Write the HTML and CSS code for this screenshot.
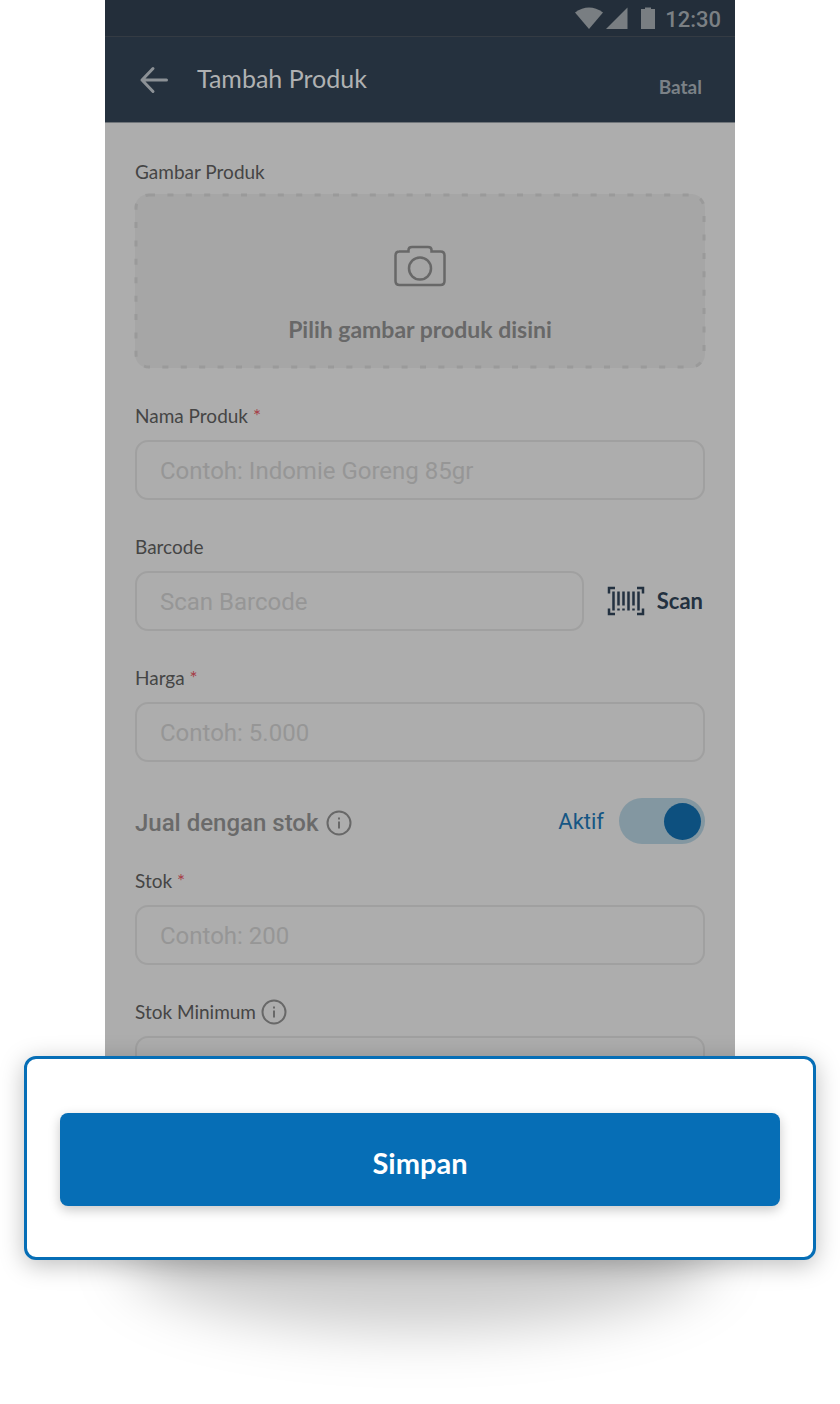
FILE: index.html
```html
<!DOCTYPE html>
<html lang="id">
<head>
<meta charset="utf-8">
<meta name="viewport" content="width=device-width, initial-scale=1">
<title>Tambah Produk</title>
<link rel="stylesheet" href="styles.css">
</head>
<body>
<main class="stage">
  <form class="phone">
    <div class="status">
      <svg class="status-icons" width="80" height="22" viewBox="0 0 80 22" aria-hidden="true">
        <path d="M0 5.500Q14 -4.500 28 5.500L14 22Z"/>
        <path d="M52.500 0.500V22H31Z"/>
        <path d="M66 2h4V.500h6V2h4V22H66Z"/>
      </svg>
      <span class="time">12:30</span>
    </div>
    <header class="bar">
      <button type="button" class="back" aria-label="Kembali">
        <svg width="30" height="28" viewBox="0 0 30 28"><path d="M27.500 14H3M14 2.500L3 14L14 25.500"/></svg>
      </button>
      <h1 class="title">Tambah Produk</h1>
      <button type="button" class="cancel">Batal</button>
    </header>

    <div class="content">
      <div class="field picture-field">
        <span class="label" id="pic-label">Gambar Produk</span>
        <button type="button" class="upload" aria-describedby="pic-label">
          <svg class="dashes" aria-hidden="true"><rect class="dash-line" x="1" y="1" rx="13"/></svg>
          <svg class="camera" width="54" height="42" viewBox="0 0 54 42" aria-hidden="true">
            <path d="M6 6.500H15.500V5Q15.500 2 19 2H35Q38.500 2 38.500 5V6.500H47.500Q51.500 6.500 51.500 10.500V36Q51.500 40 47.500 40H6.500Q2.500 40 2.500 36V10.500Q2.500 6.500 6.500 6.500Z"/>
            <circle cx="27" cy="23.500" r="11"/>
          </svg>
          <span class="upload-text">Pilih gambar produk disini</span>
        </button>
      </div>

      <div class="field">
        <label class="label" for="name">Nama Produk <span class="req">*</span></label>
        <input class="input" id="name" type="text" placeholder="Contoh: Indomie Goreng 85gr">
      </div>

      <div class="field">
        <label class="label" for="barcode">Barcode</label>
        <div class="scan-row">
          <input class="input" id="barcode" type="text" placeholder="Scan Barcode">
          <button type="button" class="scan">
            <svg width="38" height="30" viewBox="0 0 38 30" aria-hidden="true">
              <path d="M2 7.500V2H8M30 2H36V7.500M36 22.500V28H30M8 28H2V22.500"/>
              <path d="M6.500 5.500V24.500M11.500 5.500V19.500M16.500 5.500V19.500M21.500 5.500V24.500M26.500 5.500V19.500M31.500 5.500V24.500M11.500 22.500V24.500M16.500 22.500V24.500M26.500 22.500V24.500"/>
            </svg>
            <span>Scan</span>
          </button>
        </div>
      </div>

      <div class="field">
        <label class="label" for="price">Harga <span class="req">*</span></label>
        <input class="input" id="price" type="text" placeholder="Contoh: 5.000">
      </div>

      <div class="stock-row">
        <span class="stock-title">Jual dengan stok</span>
        <svg class="info" width="26" height="26" viewBox="0 0 26 26" aria-hidden="true"><circle cx="13" cy="13" r="11.500"/><path d="M13 11.500V18.500M13 7.500V9.500"/></svg>
        <label class="switch-label" for="stock-on">Aktif</label>
        <input class="switch" id="stock-on" type="checkbox" role="switch" checked>
      </div>

      <div class="field">
        <label class="label" for="stock">Stok <span class="req">*</span></label>
        <input class="input" id="stock" type="text" placeholder="Contoh: 200">
      </div>

      <div class="field">
        <div class="label-row">
          <label class="label" for="min-stock">Stok Minimum</label>
          <svg class="info" width="26" height="26" viewBox="0 0 26 26" aria-hidden="true"><circle cx="13" cy="13" r="11.500"/><path d="M13 11.500V18.500M13 7.500V9.500"/></svg>
        </div>
        <input class="input" id="min-stock" type="text">
      </div>
    </div>
  </form>

  <section class="sheet">
    <div class="sheet-card">
      <button type="button" class="save">Simpan</button>
    </div>
  </section>
</main>
</body>
</html>
```
FILE: styles.css
```css
* { box-sizing: border-box; }

body {
  margin: 0;
  background: #fff;
  font-family: Lato, "Open Sans", sans-serif;
  color: #454545;
}

button {
  font: inherit;
  color: inherit;
  background: none;
  border: 0;
  padding: 0;
  cursor: pointer;
}

svg { display: block; flex: none; }

.stage { padding-bottom: 144px; overflow: hidden; }

.phone {
  width: 75%;
  margin: 0 auto;
  background: #adadad;
}

/* Status bar and header */
.status {
  display: flex;
  justify-content: flex-end;
  align-items: center;
  gap: 10px;
  height: 37px;
  padding: 4px 14px 0 0;
  background: #232e3a;
  border-bottom: 1px solid #343b43;
}

.status-icons { fill: #797e82; margin-bottom: 4px; }

.time {
  font: 500 22px/28px Roboto, sans-serif;
  color: #7b8084;
}

.bar {
  display: flex;
  align-items: center;
  height: 86px;
  padding: 0 33px 0 34px;
  background: #25313e;
  border-bottom: 1px solid #70757a;
}

.back svg {
  fill: none;
  stroke: #8c9196;
  stroke-width: 3;
  stroke-linecap: round;
  stroke-linejoin: round;
}

.title {
  flex: 1;
  margin: 0 0 0 28px;
  padding-bottom: 4px;
  font-size: 25px;
  line-height: 32px;
  font-weight: 400;
  color: #b0b1b2;
}

.cancel {
  padding-top: 14px;
  font-size: 19px;
  line-height: 24px;
  font-weight: 700;
  color: #7b8187;
}

/* Form */
.content {
  display: flex;
  flex-direction: column;
  gap: 35px;
  padding: 37px 30px 0;
}

.field { display: flex; flex-direction: column; gap: 12px; }
.picture-field { gap: 10px; }

.label { font-size: 19px; line-height: 24px; }
.req { color: #a63c46; }

.label-row { display: flex; align-items: center; gap: 5px; height: 24px; }

.input {
  flex: 1;
  width: 100%;
  min-width: 0;
  min-height: 60px;
  padding: 2px 23px 0;
  border: 2px solid #a0a0a0;
  border-radius: 13px;
  background: transparent;
  font: 400 24px/32px Roboto, sans-serif;
  color: #404040;
}
.input::placeholder { color: #969696; opacity: 1; }

.upload {
  position: relative;
  display: flex;
  flex-direction: column;
  align-items: center;
  gap: 27px;
  padding: 51px 20px 24px;
  margin-bottom: 1px;
  border-radius: 14px;
  background: #a6a6a6;
  color: #686868;
}

.dashes {
  position: absolute;
  inset: 0;
  width: 100%;
  height: 100%;
  overflow: visible;
}

.dash-line {
  width: calc(100% - 2px);
  height: calc(100% - 2px);
  fill: none;
  stroke: #9a9a9a;
  stroke-width: 3;
  stroke-dasharray: 6 12.4;
}

.camera { fill: none; stroke: #686868; stroke-width: 2.5; }

.upload-text { font-size: 23px; line-height: 30px; font-weight: 700; }

.scan-row { display: flex; align-items: center; gap: 23px; }

.scan {
  display: flex;
  align-items: center;
  gap: 12px;
  padding-right: 2px;
  font-size: 22px;
  line-height: 28px;
  font-weight: 700;
  color: #233140;
}
.scan svg { fill: none; stroke: #233140; stroke-width: 2.5; }

.stock-row {
  display: flex;
  align-items: center;
  margin: 1px 0 -10px;
}

.stock-title {
  padding-top: 4px;
  font: 500 24px/32px Roboto, sans-serif;
  color: #6a6a6a;
  margin-right: 7px;
}

.info { fill: none; stroke: #686868; stroke-width: 2; }
.stock-row .info { margin-top: 4px; }

.switch-label {
  margin-left: auto;
  padding-top: 2px;
  font: 400 22px/32px Roboto, sans-serif;
  color: #155684;
}

.switch {
  appearance: none;
  display: flex;
  align-items: center;
  width: 86px;
  height: 46px;
  margin: 0 0 0 15px;
  padding: 0 4px;
  border-radius: 23px;
  background: #8397a1;
  cursor: pointer;
}
.switch::before {
  content: "";
  width: 37px;
  height: 37px;
  border-radius: 50%;
  background: #0d507f;
}
.switch:checked { justify-content: flex-end; }

/* Bottom sheet laid over the end of the form */
.sheet {
  position: relative;
  z-index: 1;
  margin: -40px 24px 0;
}

.sheet::before {
  content: "";
  position: absolute;
  z-index: -1;
  left: 13%;
  right: 13%;
  bottom: -70px;
  height: 150px;
  border-radius: 50%;
  background: rgba(0, 0, 0, 0.2);
  filter: blur(28px);
}

.sheet-card {
  padding: 54px 33px 51px;
  border: 3px solid #066eb6;
  border-radius: 12px;
  background: #fff;
  box-shadow: 0 5px 24px rgba(0, 0, 0, 0.26);
}

.save {
  display: block;
  width: 100%;
  padding: 32px 20px 25px;
  border-radius: 8px;
  background: #066eb6;
  box-shadow: 0 4px 12px rgba(0, 0, 0, 0.22);
  color: #fff;
  font-size: 29px;
  line-height: 36px;
  font-weight: 700;
}
```
